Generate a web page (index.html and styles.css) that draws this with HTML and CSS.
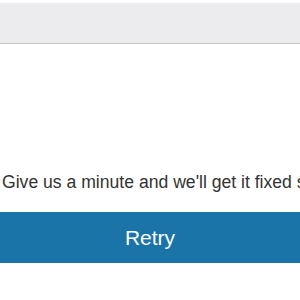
FILE: index.html
```html
<!DOCTYPE html>
<html>
<head>
<meta charset="utf-8">
<link rel="stylesheet" href="styles.css">
</head>
<body>
<div class="page">
  <div class="topbar"></div>
  <div class="content">
    <p class="message">Give us a minute and we'll get it fixed soon.</p>
    <button class="retry">Retry</button>
  </div>
</div>
</body>
</html>
```
FILE: styles.css
```css
html, body {
  margin: 0;
  padding: 0;
  background: #ffffff;
  overflow: hidden;
}
.page {
  width: 300px;
  height: 300px;
  padding-top: 3px;
  box-sizing: border-box;
  font-family: "Liberation Sans", Arial, sans-serif;
  overflow: hidden;
}
.topbar {
  height: 40px;
  background: #ececee;
  border-bottom: 1px solid #c8c8c8;
}
.content {
  padding-top: 127px;
}
.message {
  margin: 0 0 0 2px;
  font-size: 17.6px;
  line-height: 22px;
  color: #333333;
  white-space: nowrap;
}
.retry {
  display: block;
  width: 100%;
  height: 51px;
  margin-top: 19px;
  border: none;
  background: #1a74a8;
  color: #ffffff;
  font-family: "Liberation Sans", Arial, sans-serif;
  font-size: 21px;
  padding: 0;
}
```
